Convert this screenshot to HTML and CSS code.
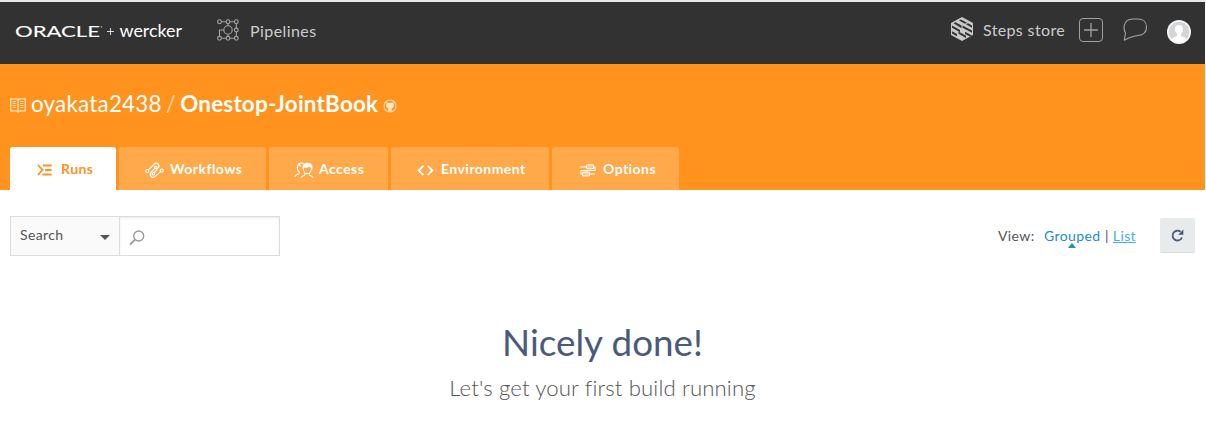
FILE: index.html
```html
<!DOCTYPE html>
<html lang="en">
<head>
<meta charset="utf-8">
<title>Onestop-JointBook - wercker</title>
<link rel="stylesheet" href="styles.css">
</head>
<body>
<header class="topbar">
  <svg class="brand" width="170" height="20" viewBox="0 0 170 20" fill="#fff">
    <text class="brand-oracle" x="0" y="14.6" textLength="85" lengthAdjust="spacingAndGlyphs">ORACLE</text>
    <circle cx="86.500" cy="5" r=".7" opacity=".7"/>
    <path d="M92 9.500h7M95.500 6v7" stroke="#fff" stroke-width=".8"/>
    <text class="brand-wercker" x="104.500" y="14.500" textLength="62.500" lengthAdjust="spacingAndGlyphs">wercker</text>
  </svg>
  <a class="pipelines">
    <svg width="22" height="22" viewBox="0 0 22 22" fill="none" stroke="#a5a5a5" stroke-width="1.100">
      <circle cx="2.500" cy="2.700" r="1.900"/><circle cx="11" cy="2.700" r="1.900"/><circle cx="19.300" cy="2.700" r="1.900"/>
      <circle cx="19.300" cy="11" r="1.900"/><circle cx="2.500" cy="19.300" r="1.900"/><circle cx="11" cy="19.300" r="1.900"/><circle cx="19.300" cy="19.300" r="1.900"/>
      <circle cx="11" cy="11" r="4.200"/>
      <path d="M4.400 2.700h4.700M12.900 2.700h4.500M19.300 4.600v4.500M19.300 12.900v4.500M4.400 19.300h4.700M12.900 19.300h4.500M2.500 17.400V11h4.300M11 4.600v2.200M11 15.200v2.200"/>
    </svg>
    <span>Pipelines</span>
  </a>
  <nav class="tools">
    <svg class="steps-icon" width="24" height="26" viewBox="0 0 24 26">
      <path d="M12 1l11 6v12l-11 6-11-6V7z" fill="#c9c9c9"/>
      <g fill="#323232">
        <path d="M9 4.500l2-1 6 3.200-2 1.100zM3.500 7.300l2-1 6 3.300v2.600z"/>
        <path d="M2 9.500l8 4.600v2.200l-8-4.600zM12.500 9.500L22 14.500v2.200l-9.500-5zM16 8.300l2-1 4 2.200v2.200z"/>
        <path d="M2 15.200l5 2.900v2.200l-5-2.800zM8.500 15.500l7.500 4.300v2.200l-7.500-4.300zM15 15.800l7 3.700-2 1.100-5-2.700z"/>
      </g>
    </svg>
    <span class="steps-label">Steps store</span>
    <svg class="add-icon" width="24" height="24" viewBox="0 0 24 24" fill="none" stroke="#a0a0a0" stroke-width="1">
      <rect x=".5" y=".5" width="23" height="23" rx="3.500"/><path d="M12 5v14M5 12h14" stroke-width="1.300"/>
    </svg>
    <svg class="chat-icon" width="25" height="24" viewBox="0 0 25 24" fill="none" stroke="#a5a5a5" stroke-width="1.100" stroke-linejoin="round">
      <path d="M1.300 22.200L2.500 15C1 12.500.8 10 1.300 7.500C2 3.500 5 1 10 1h5c5 0 8.500 3 8.500 8s-3 8-8.500 8.500c-5 .4-9 2.200-13.700 4.700z"/>
    </svg>
    <svg class="avatar" width="24" height="24" viewBox="0 0 24 24">
      <circle cx="12" cy="12" r="12" fill="#f7f7f7"/><circle cx="12" cy="12" r="10.300" fill="#d3d6d8"/>
      <path d="M4.800 19.700c.4-2.500 2.500-2.600 5.200-3.800v-2C8.500 12.500 8 11 8 9.300C8 6.500 9.500 5 12 5s4 1.500 4 4.300c0 1.700-.5 3.200-2 4.600v2c2.700 1.200 4.800 1.300 5.200 3.800C15 23.500 9 23.500 4.800 19.700z" fill="#fff"/>
    </svg>
  </nav>
</header>

<section class="project">
  <h1 class="title">
    <svg class="book" width="16" height="15" viewBox="0 0 16 15" fill="none" stroke="#ffe0bb">
      <path d="M.7.900h5.800q1 0 1.500.7q.5-.7 1.500-.7h5.800v12H9.500q-1 0-1.500 1q-.5-1-1.500-1H.7zM8 1.500v12" stroke-width="1.300"/>
      <path d="M2.700 3.500h3M2.700 5.500h3M2.700 7.500h3M2.700 9.500h3M10.300 3.500h3M10.300 5.500h3M10.300 7.500h3M10.300 9.500h3"/>
    </svg>
    <span class="owner">oyakata2438</span><span class="slash">/</span><span class="repo">Onestop-JointBook</span>
    <svg class="github" width="14" height="14" viewBox="0 0 14 14">
      <circle cx="7" cy="7" r="6" fill="none" stroke="#ffd8a9" stroke-width="1.100"/>
      <path d="M3.500 3l1.800.8h3.400l1.800-.8.300 3c.2 2-.7 3-2.100 3.300v3.300H5.300V9.300C3.900 9 3 8 3.200 6z" fill="#ffe6ca"/>
    </svg>
  </h1>
  <nav class="tabs">
    <a class="tab tab-runs active">
      <svg width="16" height="12" viewBox="0 0 16 12" fill="none" stroke="#ff931e" stroke-width="1.800"><path d="M1 1l4.500 4.800L1 10.800M6 1.500h8.700M8 6h6.700M5.500 10.500h9.200"/></svg>
      <span>Runs</span>
    </a>
    <a class="tab tab-workflows">
      <svg width="19" height="17" viewBox="0 0 19 17" fill="none" stroke="#fff" stroke-width="1.200">
        <circle cx="2.300" cy="9" r="1.500"/><circle cx="16.700" cy="8.500" r="1.500"/><circle cx="10.800" cy="5.300" r="1.200"/><circle cx="8.300" cy="11.700" r="1.200"/>
        <path d="M3.400 7.900l5.800-5.800c1.200-1.200 3-1.200 4 0s1 2.700-.1 3.800L9.200 10.800M10 6.200l-4 4.200c-1.100 1.200-1 2.800.1 4s2.800 1 4 0l5.500-4.800"/>
      </svg>
      <span>Workflows</span>
    </a>
    <a class="tab tab-access">
      <svg width="20" height="17" viewBox="0 0 20 17" fill="none" stroke="#fff" stroke-width="1.100">
        <path d="M.7 15c.4-2.400 2-2.400 4-3.300.9-.6.800-1.200.2-2C3.600 8.200 3 5.500 3.700 3.300 4.500.8 8 .4 10 2M7 15.800c.5-1.800 2-2 3.800-2.800v-2M19 15.800c-.5-1.800-2-2-3.500-2.800v-2M9.300 6c.1 3 1.700 5.700 4 5.700S17.500 9 17.600 6"/>
        <path d="M9 7C7.500 3 10 .7 13.500.7c4 0 6 2.800 4.700 7.300l-1-.3c-.2-1.700-1-2.700-2.300-3.200-1.200 1.500-3.500 1.500-5 1z" fill="#fff" stroke="none"/>
        <path d="M5 2.700l2 1.500"/>
      </svg>
      <span>Access</span>
    </a>
    <a class="tab tab-environment">
      <svg width="17" height="11" viewBox="0 0 17 11" fill="none" stroke="#fff" stroke-width="1.900"><path d="M6.300.8L1.700 5.500l4.600 4.700M10.700.8l4.600 4.700-4.600 4.700"/></svg>
      <span>Environment</span>
    </a>
    <a class="tab tab-options">
      <svg width="16" height="13" viewBox="0 0 16 13" fill="none" stroke="#fff" stroke-width="1.100">
        <path d="M0 3h6.500M13.500 3H15v3.500H1V10h2M9.500 10H15"/><rect x="6.500" y=".8" width="7" height="4" rx="1.300" fill="#ffc88a"/><rect x="2.500" y="8" width="7" height="4" rx="1.300" fill="#ffc88a"/>
      </svg>
      <span>Options</span>
    </a>
  </nav>
</section>

<main>
  <div class="filters">
    <div class="search">
      <div class="search-type"><span>Search</span><svg width="10" height="5" viewBox="0 0 10 5"><path d="M0 0h10L5 5z" fill="#555"/></svg></div>
      <div class="search-input"><svg width="16" height="16" viewBox="0 0 16 16" fill="none" stroke="#999"><circle cx="9.700" cy="6" r="5" stroke-width="1.300"/><path d="M6 9.700L1 14.700" stroke-width="1.900"/></svg></div>
    </div>
    <div class="view">
      <span class="view-label">View:</span><a class="grouped">Grouped</a><span class="divider">|</span><a class="list">List</a>
      <button class="refresh" aria-label="Refresh"><svg width="13" height="13" viewBox="0 0 13 13"><path d="M11 8.500A4.900 4.900 0 1 1 9.700 2.900" fill="none" stroke="#4a5a7c" stroke-width="1.800"/><path d="M12.400.5v5.200H7.200z" fill="#4a5a7c"/></svg></button>
    </div>
  </div>
  <h2 class="done">Nicely done!</h2>
  <p class="hint">Let's get your first build running</p>
</main>
</body>
</html>
```
FILE: styles.css
```css
* { box-sizing: border-box; }
body { margin: 0; width: 1205px; background: #fff; font-family: Lato, sans-serif; font-variant-ligatures: none; color: #555; }
svg { display: block; flex: none; }
span, a { white-space: nowrap; }

.topbar { height: 64px; border-top: 2px solid #e5e8eb; background: #323232; display: flex; align-items: flex-start; }
.brand { margin: 20px 0 0 15px; overflow: visible; }
.brand-oracle { font: 400 15.500px Lato, sans-serif; stroke: #fff; stroke-width: .1px; }
.brand-wercker { font: 400 17.500px Lato, sans-serif; }
.pipelines { display: flex; margin: 17px 0 0 32px; gap: 11px; font-size: 16px; line-height: 24px; letter-spacing: .42px; color: #ccc; }
.tools { display: flex; margin-left: auto; padding-right: 14px; color: #ccc; }
.steps-icon { margin: 14px 9px 0 0; }
.steps-label { margin-top: 16px; width: 82px; font-size: 16px; line-height: 24px; letter-spacing: .36px; }
.add-icon { margin: 16px 0 0 14px; }
.chat-icon { margin: 16px 0 0 20px; }
.avatar { margin: 18px 0 0 19px; }

.project { height: 126px; background: #ff931e; padding: 24px 10px 0; }
.title { display: flex; margin: 0; height: 59px; color: #fff; font-size: 22.400px; font-weight: 400; line-height: 31px; letter-spacing: .23px; }
.book { margin: 10px 5px 0 0; }
.slash { margin: 0 4px 0 4px; color: #ffd3a0; }
.repo { font-weight: 700; }
.github { margin: 11px 0 0 5px; }
.tabs { display: flex; gap: 3px; height: 43px; }
.tab { display: flex; align-items: center; padding-top: 1px; background: #ffa94a; border-radius: 3px 3px 0 0; color: #fff; font-size: 14px; font-weight: 700; letter-spacing: .45px; }
.tab span { margin-bottom: 1px; }
.tab svg { position: relative; top: 1px; }
.active { background: #fff; color: #ff931e; }
.tab-runs { width: 106px; padding-left: 27px; gap: 8px; }
.tab-workflows { width: 147px; padding-left: 26px; gap: 6px; }
.tab-access { width: 119px; padding-left: 25px; gap: 5px; }
.tab-environment { width: 158px; padding-left: 26px; gap: 7px; }
.tab-options { width: 127px; padding-left: 28px; gap: 7px; }

.filters { display: flex; justify-content: space-between; padding: 26px 10px 0; height: 66px; font-size: 14px; letter-spacing: .38px; }
.search { display: flex; width: 270px; height: 40px; border: 1px solid #d9dfdf; }
.search-type { display: flex; align-items: center; justify-content: space-between; width: 109px; padding: 0 9px; background: #fafafa; border-right: 1px solid #d9dfdf; }
.search-type span { margin-bottom: 3px; }
.search-type svg { margin-top: 3px; }
.search-input { flex: 1; padding: 13px 0 0 9px; box-shadow: inset 0 1px 2px #e5eaea; }
.view { display: flex; line-height: 40px; }
.grouped { display: flex; flex-direction: column; align-items: center; margin-left: 9.500px; color: #1f8dc8; }
.grouped::after { content: ""; margin-top: -13px; border: 4px solid transparent; border-top: 0; border-bottom: 5px solid #1f8dc8; }
.divider { margin: 0 4px 0 4.500px; }
.list { color: #43b1e8; text-decoration: underline; }
.refresh { display: flex; align-items: center; justify-content: center; width: 35px; height: 35px; margin: 2px 0 0 24px; padding: 0; border: 0; border-bottom: 1px solid #d5dada; border-radius: 2px; background: #e8ebeb; }
.done { margin: 62px 0 0; text-align: center; color: #4a5a7c; font-size: 36.800px; font-weight: 400; line-height: 48px; }
.hint { margin: 7px 0 0; text-align: center; font-size: 22.200px; font-weight: 300; line-height: 30px; letter-spacing: .12px; }
```
